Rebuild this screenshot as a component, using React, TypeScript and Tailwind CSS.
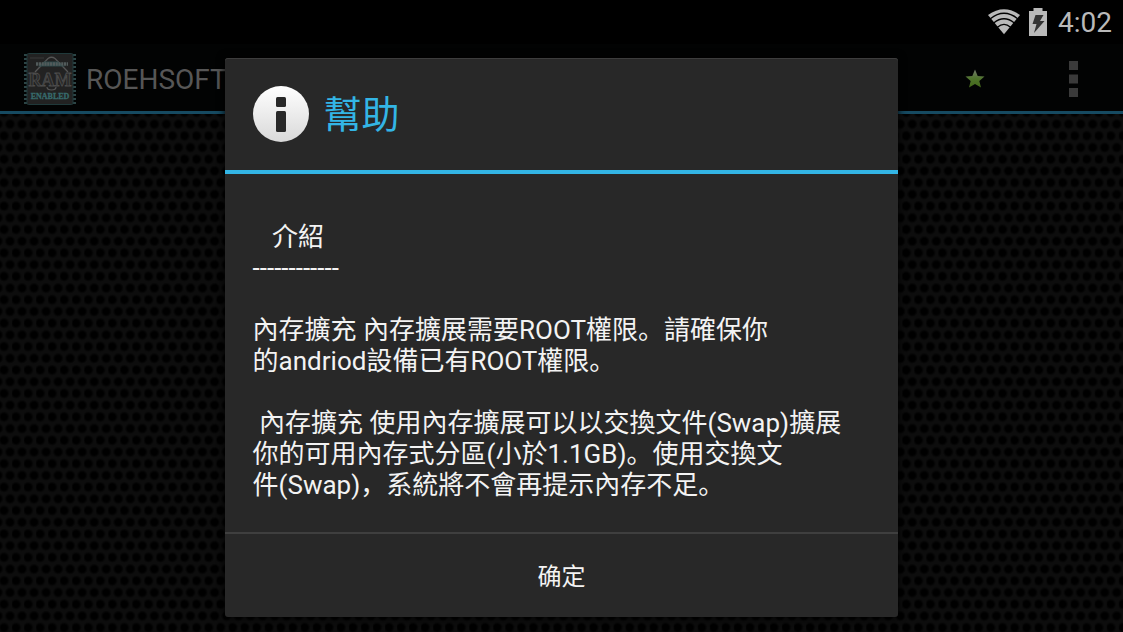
const PINS = Array.from({ length: 13 }, (_, i) => 1 + i * 4);

const HELP_TEXT = [
  "   介紹",
  "------------",
  "",
  "內存擴充 內存擴展需要ROOT權限。請確保你",
  "的andriod設備已有ROOT權限。",
  "",
  " 內存擴充 使用內存擴展可以以交換文件(Swap)擴展",
  "你的可用內存式分區(小於1.1GB)。使用交換文",
  "件(Swap)，系統將不會再提示內存不足。",
].join("\n");

function MeshBackground() {
  return (
    <svg className="absolute inset-0 h-full w-full" aria-hidden="true">
      <defs>
        <radialGradient id="hole">
          <stop offset="0.55" stopColor="#000000" />
          <stop offset="1" stopColor="#000000" stopOpacity="0" />
        </radialGradient>
        <pattern id="mesh" width="12.03" height="23.42" y="1" patternUnits="userSpaceOnUse">
          <rect width="13" height="24" fill="#0d0d0d" />
          <circle cx="10" cy="6" r="5.6" fill="url(#hole)" />
          <circle cx="-2.03" cy="6" r="5.6" fill="url(#hole)" />
          <circle cx="4" cy="17.7" r="5.6" fill="url(#hole)" />
        </pattern>
      </defs>
      <rect width="100%" height="100%" fill="url(#mesh)" />
    </svg>
  );
}

function RamLogo() {
  return (
    <svg className="h-13 w-13 shrink-0" viewBox="0 0 52 52" aria-hidden="true">
      {PINS.map((y) => (
        <g key={y} fill="#2c4546">
          <rect x="0" y={y} width="3" height="2" />
          <rect x="49" y={y} width="3" height="2" />
        </g>
      ))}
      <rect x="3" y="0.5" width="46" height="51" rx="1.5" fill="#222222" stroke="#20393a" />
      <rect x="6" y="4.5" width="14" height="1" fill="#383838" />
      <path d="M11 19 24 5.5Q27.500 3 31 5.500L44 19" fill="none" stroke="#555555" strokeWidth="1.3" />
      <path d="M20 8.500h14l7 5H14z" fill="#2a4748" />
      <path d="M12 11h32" stroke="#525b5b" strokeWidth="3.500" strokeDasharray="2.200 .6" />
      <path d="M23 34q0 3 4.500 3t4.500-3" fill="none" stroke="#555555" strokeWidth="1.2" />
      <text
        x="26"
        y="33"
        textAnchor="middle"
        fontSize="18"
        fontWeight="bold"
        fill="#2a2a2a"
        stroke="#4c4c4c"
        strokeWidth="0.8"
        className="font-['Liberation_Serif',serif]"
      >
        RAM
      </text>
      <text
        x="26"
        y="46"
        textAnchor="middle"
        fontSize="8"
        fontWeight="bold"
        fill="#376b6c"
        stroke="#376b6c"
        strokeWidth="0.3"
        className="font-['Liberation_Serif',serif]"
      >
        ENABLED
      </text>
    </svg>
  );
}

function StatusBar() {
  return (
    <div className="relative flex h-11 shrink-0 items-center justify-end bg-black pr-[11px] text-[#b9b9b9]">
      <svg className="mr-2 h-7 w-8" viewBox="0 0 34 28" aria-label="Wi-Fi">
        <path d="M0 6.500Q17-5.500 34 6.500L17 27z" fill="#b9b9b9" />
        <g fill="none" stroke="#000000" strokeWidth="1.4">
          <path d="M2.500 10.500Q17-1 31.500 10.500" />
          <path d="M6 15Q17 6 28 15" />
          <path d="M10 19.500Q17 13.500 24 19.500" />
        </g>
      </svg>
      <svg className="mr-2.5 h-7 w-5" viewBox="0 0 20 28" aria-label="Battery charging">
        <path d="M1 3h4.500V0h9v3H19v25H1z" fill="#b9b9b9" />
        <path d="M7.500 7h8l-3.500 6h4.500L6 25l2.500-9H4.500z" fill="#333333" />
      </svg>
      <span className="pt-0.5 text-[28px] leading-8">4:02</span>
    </div>
  );
}

function ActionBar() {
  return (
    <header className="relative flex h-[70px] shrink-0 items-center border-b-3 border-[#164a61] bg-[#020303] pt-0.5 pl-6">
      <RamLogo />
      <h1 className="ml-2.5 flex-1 pt-0.5 text-[28px] leading-8 text-[#565656]">ROEHSOFT</h1>
      <button type="button" aria-label="Favorite" className="flex h-16 w-20 items-center justify-center">
        <svg className="h-5 w-5" viewBox="0 0 20 20">
          <defs>
            <linearGradient id="star" x2="0" y2="1">
              <stop offset="0" stopColor="#747a6e" />
              <stop offset="0.5" stopColor="#4f742c" />
              <stop offset="1" stopColor="#426718" />
            </linearGradient>
          </defs>
          <path d="M10 .5l2.700 6.400 6.800.5-5.200 4.500 1.700 6.700-6-3.500-6 3.500 1.700-6.700L.5 7.400l6.800-.5z" fill="url(#star)" />
        </svg>
      </button>
      <button type="button" aria-label="More options" className="ml-2 flex h-16 w-25 items-center justify-center">
        <svg className="h-9 w-[9px]" viewBox="0 0 9 36" fill="#3a3a3a">
          <rect width="9" height="9" />
          <rect y="13.500" width="9" height="9" />
          <rect y="27" width="9" height="9" />
        </svg>
      </button>
    </header>
  );
}

function HelpDialog() {
  return (
    <div
      role="dialog"
      aria-labelledby="help-title"
      className="flex w-3/5 flex-col rounded-[3px] bg-[#282828] shadow-[inset_0_1px_#3d3d3d,0_0_8px_#000000]"
    >
      <div className="flex items-center gap-[15px] border-b-4 border-[#33b5e5] px-7 py-7">
        <svg className="h-14 w-14 shrink-0" viewBox="0 0 56 56" aria-hidden="true">
          <defs>
            <linearGradient id="disc" x2="0" y2="1">
              <stop offset="0" stopColor="#ffffff" />
              <stop offset="1" stopColor="#d9d9d9" />
            </linearGradient>
          </defs>
          <circle cx="28" cy="28" r="28" fill="url(#disc)" />
          <rect x="23" y="11" width="10" height="10" rx="1.500" fill="#282828" />
          <rect x="23" y="25" width="10" height="21" rx="1.500" fill="#282828" />
        </svg>
        <h2 id="help-title" className="pt-0.5 text-[38px] leading-12 text-[#33b5e5]">
          幫助
        </h2>
      </div>
      <p className="px-7 pt-12 pb-[31px] text-[26px] leading-[31px] whitespace-pre-wrap text-[#f3f3f3]">{HELP_TEXT}</p>
      <button type="button" className="h-[85px] border-t-2 border-[#3f3f3f] pt-0.5 text-2xl text-[#f3f3f3]">
        确定
      </button>
    </div>
  );
}

export default function App() {
  return (
    <div className="relative flex min-h-screen flex-col overflow-hidden bg-black font-['Roboto','Noto_Sans_CJK_SC',sans-serif]">
      <MeshBackground />
      <StatusBar />
      <ActionBar />
      <div className="absolute inset-x-0 top-11 bottom-0 flex items-start justify-center pt-3.5">
        <HelpDialog />
      </div>
    </div>
  );
}
